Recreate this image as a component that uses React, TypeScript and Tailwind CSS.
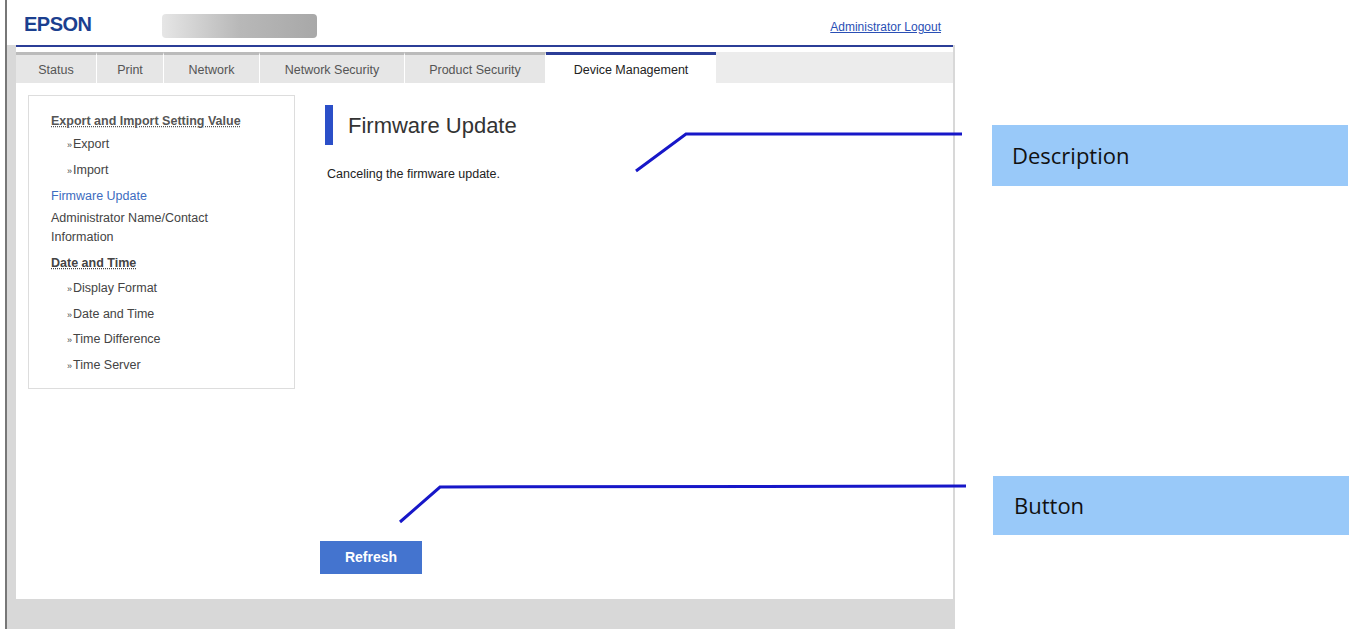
const TABS = [
  { label: 'Status', w: 81 },
  { label: 'Print', w: 67 },
  { label: 'Network', w: 96 },
  { label: 'Network Security', w: 145 },
  { label: 'Product Security', w: 141 },
]

const SUB = (t: string) => (
  <div className="pl-[16px] text-[12.5px] text-[#444] leading-[24.5px]">
    <span className="text-[9px] mr-[1px]">»</span>{t}
  </div>
)

export default function App() {
  return (
    <div className="relative w-[1357px] h-[629px] bg-white overflow-hidden" style={{ fontFamily: 'Arial, "Liberation Sans", sans-serif' }}>
      <div className="flex h-full">
        {/* device page */}
        <div className="ml-[5px] w-[950px] h-full flex flex-col border-l-2 border-[#777] bg-[#d8d8d8]">
          <div className="h-[45px] bg-white flex items-end pb-[6px] pl-[17px] pr-[14px]">
            <span className="text-[20px] font-bold text-[#1b3f8f] tracking-[-0.5px]">EPSON</span>
            <div className="ml-[70px] mb-[1px] w-[155px] h-[24px] bg-gradient-to-r from-[#e6e6e6] via-[#b8b8b8] to-[#a8a8a8] rounded-sm" />
            <a className="ml-auto mb-[3px] text-[12px] text-[#2a4fb5] underline">Administrator Logout</a>
          </div>
          <div className="h-[2px] bg-[#2b3d97] ml-[9px] mr-[2px]" />
          <div className="ml-[9px] mr-[2px] bg-[#d8d8d8] flex-1 flex flex-col">
            <div className="flex items-end h-[36px] pt-[5px] bg-white">
              {TABS.map(t => (
                <div key={t.label} style={{ width: t.w }} className="h-[31px] pt-[2px] bg-[#e6e6e6] border-t-[3px] border-[#bbb] border-r border-r-white flex items-center justify-center text-[12.5px] text-[#555]">
                  {t.label}
                </div>
              ))}
              <div className="w-[170px] h-[31px] pt-[3px] bg-white border-t-[3px] border-[#2b3d97] flex items-center justify-center text-[12.5px] text-[#222]">
                Device Management
              </div>
              <div className="flex-1 h-[31px] bg-[#ececec]" />
            </div>
            <div className="flex-1 bg-white flex pl-[12px] pt-[12px] mb-[30px]">
              <div className="w-[267px] h-[294px] border border-[#ddd] pl-[22px] pt-[14px]">
                <div className="text-[12.5px] font-bold text-[#555] underline decoration-dotted leading-[22px]">Export and Import Setting Value</div>
                {SUB('Export')}
                {SUB('Import')}
                <div className="text-[12.5px] text-[#3d6cc0] leading-[26px]">Firmware Update</div>
                <div className="text-[12.5px] text-[#444] leading-[19px]">Administrator Name/Contact<br />Information</div>
                <div className="text-[12.5px] font-bold text-[#444] underline decoration-dotted leading-[26px] mt-[3px]">Date and Time</div>
                {SUB('Display Format')}
                {SUB('Date and Time')}
                {SUB('Time Difference')}
                {SUB('Time Server')}
              </div>
              <div className="ml-[32px] flex flex-col flex-1">
                <div className="flex items-center h-[40px] mt-[10px]">
                  <div className="w-[8px] h-[40px] bg-[#2b4fc8] -ml-[2px]" />
                  <span className="ml-[15px] text-[22px] text-[#333]">Firmware Update</span>
                </div>
                <div className="mt-[20px] text-[12.5px] text-[#222]">Canceling the firmware update.</div>
                <button className="mt-auto mb-[25px] w-[102px] h-[33px] bg-[#4474cf] text-white font-bold text-[14px] -ml-[7px]">Refresh</button>
              </div>
            </div>
          </div>
        </div>
        {/* callouts */}
        <div className="flex-1 relative">
          <div className="ml-[37px] mt-[125px] w-[356px] h-[61px] bg-[#99c9f9] flex items-center pl-[20px] text-[22px] text-[#111]" style={{ fontFamily: '"Open Sans", sans-serif' }}>Description</div>
          <div className="ml-[38px] mt-[290px] w-[356px] h-[59px] bg-[#99c9f9] flex items-center pl-[21px] text-[22px] text-[#111]" style={{ fontFamily: '"Open Sans", sans-serif' }}>Button</div>
        </div>
      </div>
      <svg className="absolute inset-0 pointer-events-none" width="1357" height="629">
        <polyline points="636,171 686,134 962,134" fill="none" stroke="#1717c8" strokeWidth="3" />
        <polyline points="400,522 440,487 966,486" fill="none" stroke="#1717c8" strokeWidth="3" />
      </svg>
    </div>
  )
}
